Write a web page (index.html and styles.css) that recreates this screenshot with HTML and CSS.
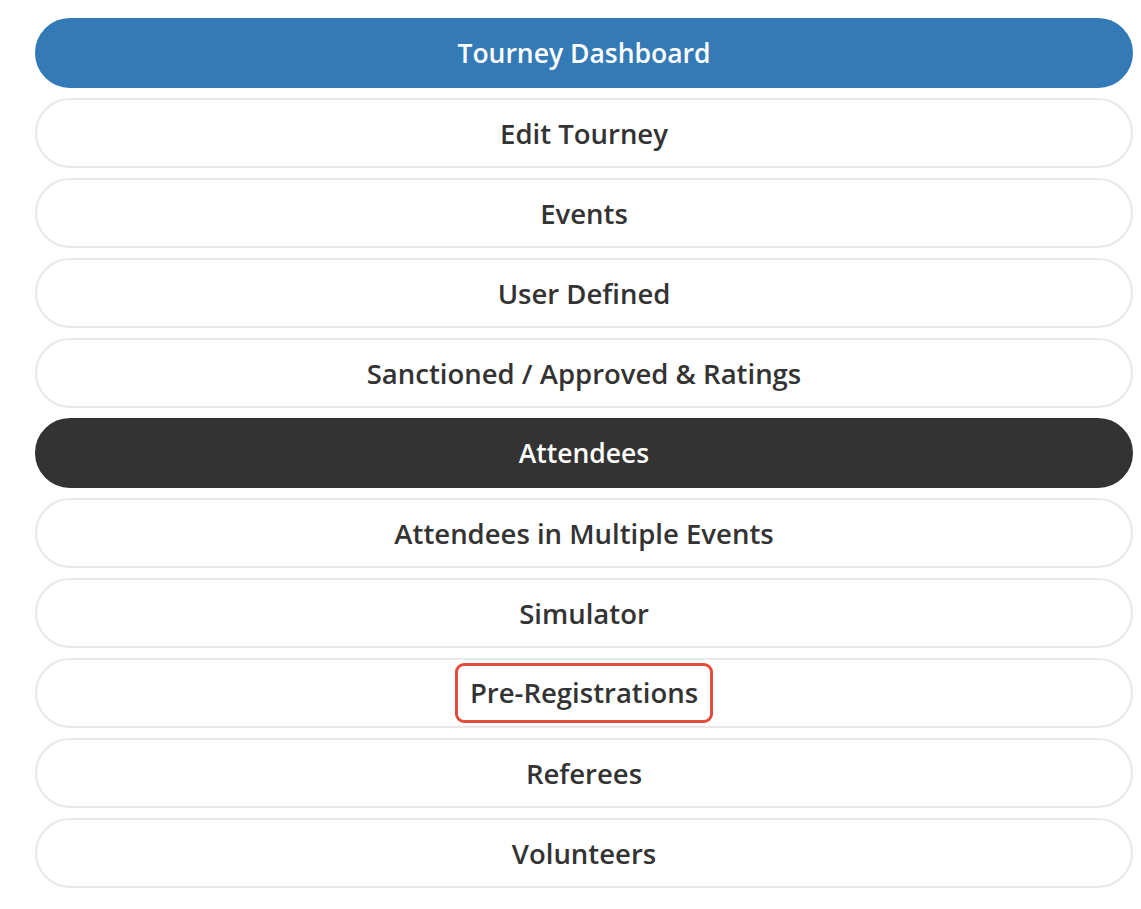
FILE: index.html
```html
<!DOCTYPE html>
<html>
<head>
<meta charset="utf-8">
<link rel="stylesheet" href="styles.css">
</head>
<body>
<nav class="menu">
  <a class="item primary">Tourney Dashboard</a>
  <a class="item">Edit Tourney</a>
  <a class="item">Events</a>
  <a class="item">User Defined</a>
  <a class="item">Sanctioned / Approved &amp; Ratings</a>
  <a class="item dark">Attendees</a>
  <a class="item">Attendees in Multiple Events</a>
  <a class="item">Simulator</a>
  <a class="item"><span class="highlight">Pre-Registrations</span></a>
  <a class="item">Referees</a>
  <a class="item">Volunteers</a>
</nav>
</body>
</html>
```
FILE: styles.css
```css
html, body {
  margin: 0;
  padding: 0;
  background: #fff;
}
body {
  font-family: "Open Sans", "Noto Sans", sans-serif;
}
.menu {
  display: flex;
  flex-direction: column;
  gap: 10px;
  padding: 18px 8px 0 35px;
}
.item {
  box-sizing: border-box;
  height: 70px;
  display: flex;
  align-items: center;
  justify-content: center;
  border: 2px solid #e8e8e8;
  border-radius: 35px;
  background: #fff;
  color: #333;
  font-size: 27.5px;
  font-weight: 600;
}
.item.primary {
  background: #337ab7;
  border-color: #337ab7;
  color: #fff;
  font-size: 26.5px;
}
.item.dark {
  background: #333;
  border-color: #333;
  color: #fff;
  font-size: 26.5px;
}
.highlight {
  border: 3px solid #e14c3b;
  border-radius: 9px;
  padding: 12px 12px;
  line-height: 30px;
}
```
